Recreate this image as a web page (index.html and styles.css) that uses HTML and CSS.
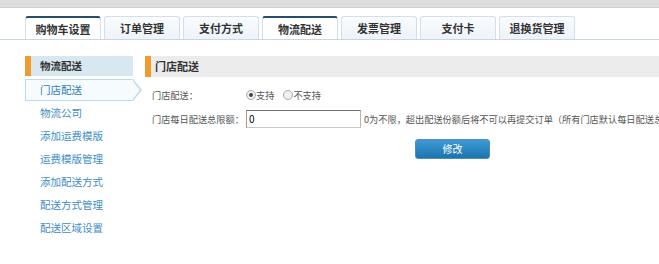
FILE: index.html
```html
<!DOCTYPE html>
<html lang="zh">
<head>
<meta charset="utf-8">
<link rel="stylesheet" href="styles.css">
</head>
<body>
<div class="topbar"></div>
<div class="tabs">
  <div class="tab active">购物车设置</div>
  <div class="tab">订单管理</div>
  <div class="tab">支付方式</div>
  <div class="tab active">物流配送</div>
  <div class="tab">发票管理</div>
  <div class="tab">支付卡</div>
  <div class="tab">退换货管理</div>
</div>
<div class="layout">
  <div class="sidebar">
    <div class="side-head">物流配送</div>
    <div class="side-item current">门店配送<span class="arrow"></span></div>
    <div class="side-item">物流公司</div>
    <div class="side-item">添加运费模版</div>
    <div class="side-item">运费模版管理</div>
    <div class="side-item">添加配送方式</div>
    <div class="side-item">配送方式管理</div>
    <div class="side-item">配送区域设置</div>
  </div>
  <div class="main">
    <div class="main-head">门店配送</div>
    <div class="row">
      <span class="label">门店配送：</span>
      <span class="radio checked"></span><span class="rtext">支持</span>
      <span class="radio"></span><span class="rtext">不支持</span>
    </div>
    <div class="row row2">
      <span class="label">门店每日配送总限额：</span>
      <span class="input">0</span>
      <span class="hint">0为不限，超出配送份额后将不可以再提交订单（所有门店默认每日配送总限额）</span>
    </div>
    <div class="btnrow"><span class="btn">修改</span></div>
  </div>
</div>
</body>
</html>
```
FILE: styles.css
```css
html, body { margin: 0; padding: 0; background: #fff; overflow: hidden; }
body { font-family: "Noto Sans CJK SC", "Liberation Sans", sans-serif; font-size: 11px; color: #333; width: 659px; height: 264px; }
.topbar { height: 7px; background: #dedede; border-bottom: 1px solid #cfcfcf; }
.tabs { display: flex; gap: 3px; padding-left: 25px; margin-top: 8px; border-bottom: 1px solid #c7d6e3; height: 23px; }
.tab { flex: none; width: 74px; height: 22px; border: 1px solid #d3dfea; border-bottom: none; border-radius: 3px 3px 0 0; background: linear-gradient(#fafcfe, #edf3f9); font-weight: bold; color: #333; text-align: center; line-height: 23px; font-size: 11px; }
.tab.active { background: #fff; border-top: 2px solid #264d6e; height: 21px; line-height: 22px; border-color: #264d6e #d3dfea #d3dfea #d3dfea; }
.layout { display: flex; padding-left: 25px; padding-top: 16px; }
.sidebar { flex: none; width: 116px; }
.side-head { height: 20px; background: #d8e8f1; border-left: 6px solid #f39a2c; line-height: 20px; padding-left: 9px; font-weight: bold; color: #333; width: 93px; font-size: 10.5px; }
.side-item { height: 23px; line-height: 23px; padding-left: 15px; color: #3d8dc6; font-size: 10.5px; position: relative; }
.side-item.current { margin-top: 3px; height: 20px; line-height: 20px; border: 1px solid #bddaec; border-right: none; background: #f6fbfe; width: 93px; color: #2e7db8; padding-left: 14px; }
.arrow { position: absolute; right: -9px; top: -1px; width: 0; height: 0; border-top: 11px solid transparent; border-bottom: 11px solid transparent; border-left: 9px solid #bddaec; }
.arrow::after { content: ""; position: absolute; left: -10px; top: -10px; border-top: 10px solid transparent; border-bottom: 10px solid transparent; border-left: 8px solid #f6fbfe; }
.main { flex: 1; min-width: 0; margin-left: 4px; overflow: hidden; }
.main-head { height: 21px; background: #ececec; border-left: 6px solid #f39a2c; line-height: 21px; padding-left: 4px; font-weight: bold; color: #333; font-size: 11px; }
.row { display: flex; align-items: center; padding-left: 7px; margin-top: 10px; height: 16px; color: #555; white-space: nowrap; font-size: 9.2px; }
.label { flex: none; width: 94px; }
.radio { flex: none; width: 10px; height: 10px; border: 1px solid #aaa; border-radius: 50%; background: #f0f0f0; margin-right: 0; position: relative; box-sizing: border-box; }
.radio.checked::after { content: ""; position: absolute; left: 2px; top: 2px; width: 4px; height: 4px; border-radius: 50%; background: #444; }
.rtext { flex: none; margin-right: 9px; }
.row2 { margin-top: 7px; height: 18px; }
.input { flex: none; width: 111px; height: 16px; border: 1px solid #8f8f8f; border-color: #707070 #b5b5b5 #c7c7c7 #9a9a9a; line-height: 16px; padding-left: 2px; color: #000; margin-right: 3px; font-size: 10px; }
.hint { flex: none; color: #555; }
.btnrow { padding-left: 270px; margin-top: 11px; }
.btn { display: inline-block; width: 73px; height: 18px; line-height: 18px; text-align: center; color: #fff; border: 1px solid #4a8fc0; border-radius: 3px; background: linear-gradient(#3e9ad2, #1c74ae); font-size: 10px; }
```
